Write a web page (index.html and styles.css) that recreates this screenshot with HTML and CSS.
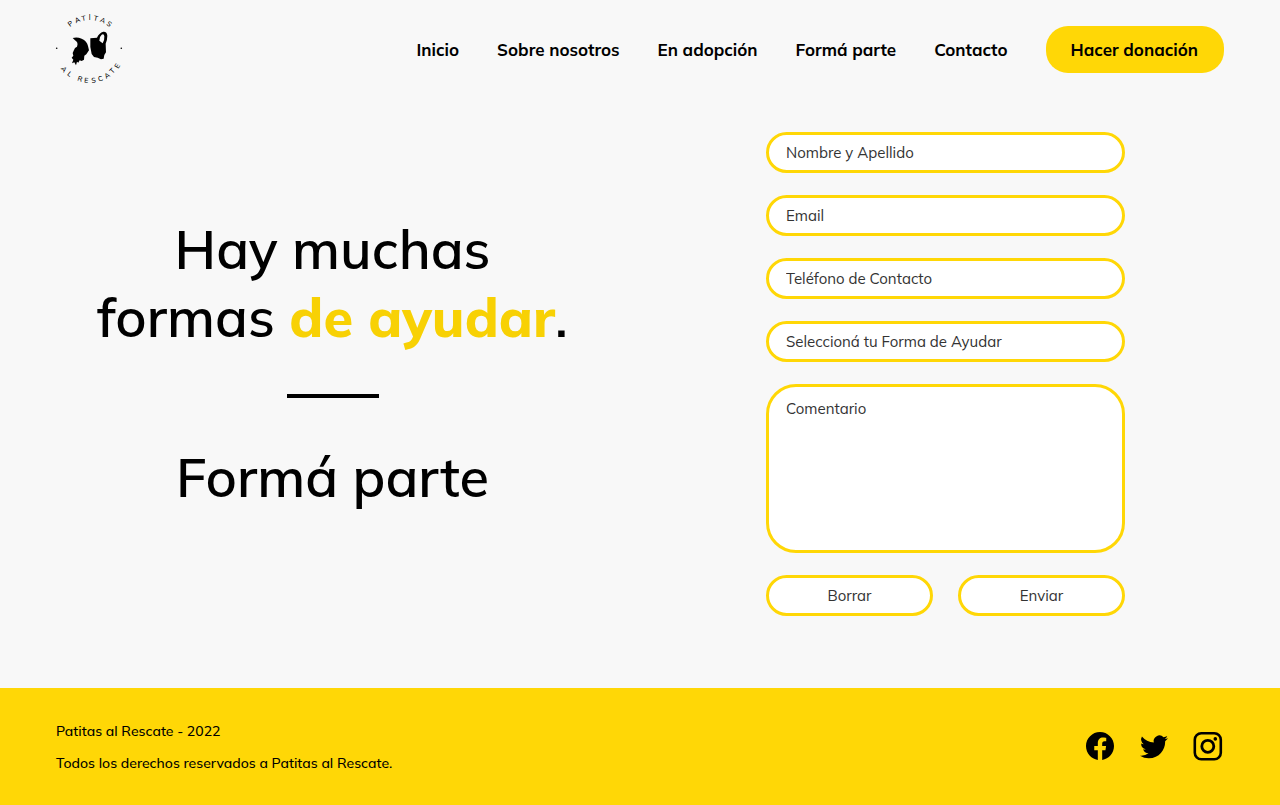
FILE: index.html
```html
<!DOCTYPE html>
<html lang="es">
<head>
<meta charset="utf-8">
<meta name="viewport" content="width=device-width, initial-scale=1">
<title>Patitas al Rescate - Formá parte</title>
<link rel="stylesheet" href="styles.css">
</head>
<body>
<header class="header">
  <a class="logo" href="#" aria-label="Patitas al Rescate">
    <svg class="logo-img" viewBox="0 0 68 68" aria-hidden="true">
      <text class="logo-text" x="15 21 27 33.7 38.2 44.4 51.1" y="12 8.3 6.1 5.2 5.2 6.5 9.4" rotate="-37 -24 -11 0 12 24 37">PATITAS</text>
      <text class="logo-text" x="5.6 11.7 18 21.9 29.1 36.7 44 51.2 57.5 63.2" y="53.7 59.8 63 65.6 67.5 67.9 66.7 64.1 59.1 54.1" rotate="51 38 28 17 5 -8 -20 -34 -46 -59">AL RESCATE</text>
      <circle cx="1.7" cy="33.3" r="0.8"/>
      <circle cx="66.3" cy="33.3" r="0.8"/>
      <g transform="translate(10 10) scale(.3333)">
        <path d="M23 39Q36 35 50 41Q66 48 69 63L72 76L64 88L58 92L57 104L50 108L44 106L40 113L36 110L33 121L28 112L21 115L25 104L20 98L25 92L23 84L26 77L30 69L36 65Q41 52 30 46Z"/>
        <path fill-rule="evenodd" d="M76 40L96 38Q102 24 115 20Q126 19 127 32Q127 45 122 56L123 82L118 90L116 101L108 103L98 98L87 96L80 87L76 66ZM103 47Q102 36 110 29Q117 25 118 34Q119 46 113 55Z"/>
      </g>
    </svg>
  </a>
  <nav class="nav">
    <a class="nav-link" href="#">Inicio</a>
    <a class="nav-link" href="#">Sobre nosotros</a>
    <a class="nav-link" href="#">En adopción</a>
    <a class="nav-link" href="#">Formá parte</a>
    <a class="nav-link" href="#">Contacto</a>
    <a class="nav-link donate" href="#">Hacer donación</a>
  </nav>
</header>

<main class="main">
  <section class="intro">
    <h1 class="title">Hay muchas<br>formas <strong class="accent">de ayudar</strong>.</h1>
    <hr class="divider">
    <h2 class="title">Formá parte</h2>
  </section>
  <form class="form">
    <input class="field" type="text" placeholder="Nombre y Apellido" aria-label="Nombre y Apellido">
    <input class="field" type="email" placeholder="Email" aria-label="Email">
    <input class="field" type="tel" placeholder="Teléfono de Contacto" aria-label="Teléfono de Contacto">
    <select class="field" aria-label="Seleccioná tu Forma de Ayudar">
      <option>Seleccioná tu Forma de Ayudar</option>
    </select>
    <textarea class="field comment" placeholder="Comentario" aria-label="Comentario"></textarea>
    <div class="actions">
      <button class="field action" type="reset">Borrar</button>
      <button class="field action" type="submit">Enviar</button>
    </div>
  </form>
</main>

<footer class="footer">
  <div class="legal">
    <p class="legal-line">Patitas al Rescate - 2022</p>
    <p class="legal-line">Todos los derechos reservados a Patitas al Rescate.</p>
  </div>
  <div class="social">
    <a class="social-link" href="#" aria-label="Facebook">
      <svg class="icon" viewBox="0 0 16 16"><path d="M16 8.049c0-4.446-3.582-8.05-8-8.05C3.58 0-.002 3.603-.002 8.05c0 4.017 2.926 7.347 6.75 7.951v-5.625h-2.03V8.05H6.75V6.275c0-2.017 1.195-3.131 3.022-3.131.876 0 1.791.157 1.791.157v1.98h-1.009c-.993 0-1.303.621-1.303 1.258v1.51h2.218l-.354 2.326H9.25V16c3.824-.604 6.75-3.934 6.75-7.951z"/></svg>
    </a>
    <a class="social-link" href="#" aria-label="Twitter">
      <svg class="icon" viewBox="0 0 16 16"><path d="M5.026 15c6.038 0 9.341-5.003 9.341-9.334 0-.14 0-.282-.006-.422A6.685 6.685 0 0 0 16 3.542a6.658 6.658 0 0 1-1.889.518 3.301 3.301 0 0 0 1.447-1.817 6.533 6.533 0 0 1-2.087.793A3.286 3.286 0 0 0 7.875 6.03a9.325 9.325 0 0 1-6.767-3.429 3.289 3.289 0 0 0 1.018 4.382A3.323 3.323 0 0 1 .64 6.575v.045a3.288 3.288 0 0 0 2.632 3.218 3.203 3.203 0 0 1-.865.115 3.23 3.23 0 0 1-.614-.057 3.283 3.283 0 0 0 3.067 2.277A6.588 6.588 0 0 1 .78 13.58a6.32 6.32 0 0 1-.78-.045A9.344 9.344 0 0 0 5.026 15z"/></svg>
    </a>
    <a class="social-link" href="#" aria-label="Instagram">
      <svg class="icon" viewBox="0 0 28 28"><rect x="0.8" y="1.3" width="26" height="26" rx="6.5" fill="none" stroke="#000" stroke-width="2.6"/><circle cx="13.8" cy="14.3" r="6" fill="none" stroke="#000" stroke-width="2.8"/><circle cx="21.3" cy="6.9" r="1.8"/></svg>
    </a>
  </div>
</footer>
</body>
</html>
```
FILE: styles.css
```css
* {
  box-sizing: border-box;
}

body {
  margin: 0;
  min-height: 100vh;
  display: flex;
  flex-direction: column;
  background: #f8f8f8;
  color: #000;
  font-family: Mulish, Lato, sans-serif;
}

.header {
  display: flex;
  align-items: center;
  justify-content: space-between;
  padding: 15px 56px;
}

.logo {
  display: block;
  margin-left: -1px;
}

.logo-img {
  display: block;
  width: 68px;
  height: 68px;
  overflow: visible;
}

.logo-text {
  font-size: 7px;
  font-weight: 500;
}

.nav {
  display: flex;
  align-items: center;
  gap: 38px;
}

.nav-link {
  color: #000;
  font-size: 17px;
  font-weight: 700;
  line-height: 23px;
  text-decoration: none;
}

.donate {
  padding: 12px 26px 12px 25px;
  border-radius: 22px;
  background: #ffd706;
}

.main {
  flex: 1;
  display: grid;
  grid-template-columns: 1fr 1fr;
  align-items: center;
  align-content: start;
  gap: 58px;
  padding: 34px 57px 64px 55px;
}

.intro {
  padding-bottom: 22px;
  text-align: center;
}

.title {
  margin: 0;
  font-size: 54px;
  font-weight: 600;
  line-height: 68px;
}

.accent {
  color: #f8d104;
  font-weight: 800;
}

.divider {
  width: 92px;
  height: 4px;
  margin: 43px auto 45px;
  border: 0;
  background: #000;
}

.form {
  display: flex;
  flex-direction: column;
  gap: 22px;
  width: 100%;
  max-width: 359px;
  margin: 0 auto;
}

.field {
  width: 100%;
  margin: 0;
  padding: 8px 17px;
  border: 3px solid #ffd706;
  border-radius: 21px;
  background: #fff;
  color: #333;
  font-family: inherit;
  font-size: 15px;
  line-height: 19px;
  appearance: none;
}

.field::placeholder {
  color: #333;
  opacity: 1;
}

.comment {
  height: 169px;
  padding-top: 12px;
  border-radius: 30px;
  resize: none;
}

.actions {
  display: flex;
  gap: 25px;
}

.action {
  flex: 1;
  text-align: center;
}

.footer {
  display: flex;
  align-items: center;
  justify-content: space-between;
  padding: 31px 58px 31px 56px;
  background: #ffd706;
}

.legal {
  display: grid;
  gap: 11px;
  padding-top: 2px;
}

.legal-line {
  margin: 0;
  font-size: 14px;
  font-weight: 500;
  line-height: 21px;
}

.social {
  display: flex;
  gap: 26px;
  padding-bottom: 2px;
}

.social-link {
  display: block;
  color: #000;
}

.icon {
  display: block;
  width: 28px;
  height: 28px;
  overflow: visible;
}
```
